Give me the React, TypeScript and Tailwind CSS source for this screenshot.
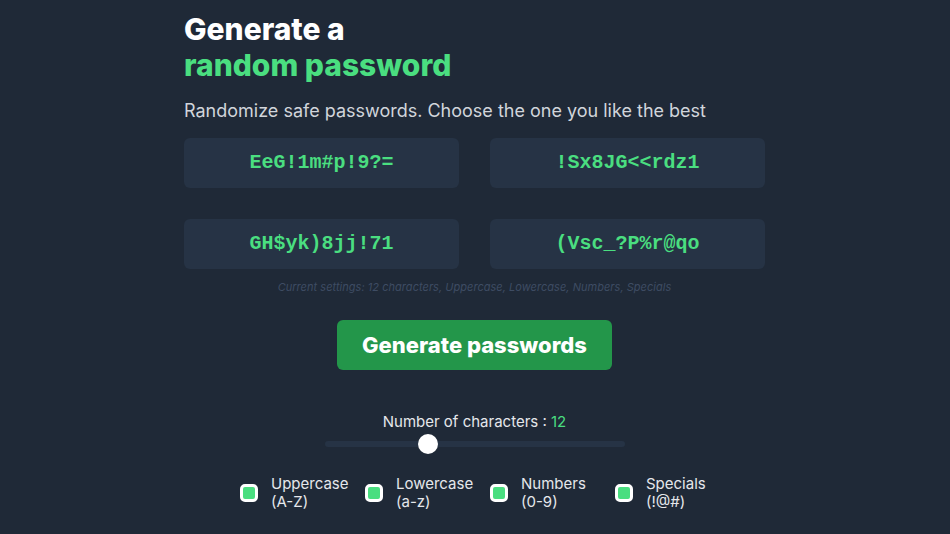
import React from 'react'

const PASSWORDS = ['EeG!1m#p!9?=', '!Sx8JG<<rdz1', 'GH$yk)8jj!71', '(Vsc_?P%r@qo']

const OPTIONS = [
  { name: 'Uppercase', hint: '(A-Z)' },
  { name: 'Lowercase', hint: '(a-z)' },
  { name: 'Numbers', hint: '(0-9)' },
  { name: 'Specials', hint: '(!@#)' },
]

const MIN = 6
const MAX = 24
const LENGTH = 12

export default function App() {
  const pct = (LENGTH - MIN) / (MAX - MIN)

  return (
    <main
      className="min-h-screen bg-[#1f2937]"
      style={{ fontFamily: 'Inter, "Noto Sans", sans-serif' }}
    >
      <div className="w-[581px] ml-[184px] pt-[11px]">
        <h1 className="text-[30px] leading-[36px] font-extrabold text-white">
          Generate a
          <br />
          <span className="text-[#4ade80]">random password</span>
        </h1>

        <p className="mt-[14px] text-lg leading-7 text-[#d1d5db]">
          Randomize safe passwords. Choose the one you like the best
        </p>

        {/* Password cards */}
        <div className="mt-[13px] grid grid-cols-2 gap-[31px]">
          {PASSWORDS.map((pw) => (
            <div
              key={pw}
              className="h-[50px] rounded-md bg-[#263345] flex items-center justify-center text-[20px] font-bold text-[#4ade80]"
              style={{ fontFamily: '"Liberation Mono", "Courier New", monospace' }}
            >
              {pw}
            </div>
          ))}
        </div>

        <p className="mt-[10px] text-center text-[11px] leading-4 italic tracking-[0.04px] text-[#3e4c63]">
          Current settings: 12 characters, Uppercase, Lowercase, Numbers, Specials
        </p>

        <div className="mt-[25px] flex justify-center">
          <button className="w-[275px] h-[50px] rounded-md bg-[#23964a] text-white text-[22px] font-extrabold">
            Generate passwords
          </button>
        </div>

        {/* Length slider */}
        <div className="mt-[42px] flex flex-col items-center">
          <p className="text-[15px] leading-5 text-[#e5e7eb]">
            Number of characters : <span className="text-[#4ade80]">{LENGTH}</span>
          </p>
          <div className="relative mt-[2px] w-[300px] h-5 flex items-center">
            <div className="w-full h-[6px] rounded-full bg-[#263345]" />
            <div
              className="absolute top-0 w-5 h-5 rounded-full bg-white"
              style={{ left: pct * 280 }}
            />
          </div>
        </div>

        {/* Character options */}
        <div className="mt-[21px] flex pl-14">
          {OPTIONS.map((opt) => (
            <label key={opt.name} className="w-[125px] flex items-center gap-[13px]">
              <span className="w-[18px] h-[18px] shrink-0 rounded-[5px] border-[3px] border-white bg-[#4ade80]" />
              <span className="text-[15px] leading-[18px] text-[#e5e7eb]">
                {opt.name}
                <br />
                {opt.hint}
              </span>
            </label>
          ))}
        </div>
      </div>
    </main>
  )
}
